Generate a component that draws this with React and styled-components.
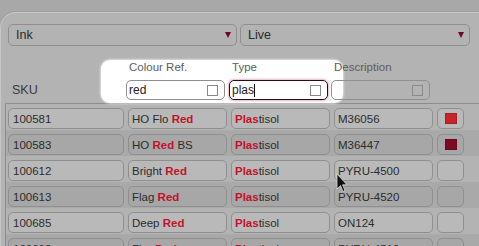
import React from 'react';
import { styled, createGlobalStyle } from 'styled-components';

const GlobalStyle = createGlobalStyle`
  html, body {
    margin: 0;
    background: #a8a8a8;
  }
  body {
    width: 479px;
    height: 246px;
    overflow: hidden;
    font-family: "Liberation Sans", Arial, sans-serif;
  }
`;

const Page = styled.div`
  position: relative;
  width: 479px;
  height: 246px;
  overflow: hidden;
`;

const Panel = styled.div`
  margin-top: 12px;
  height: 240px;
  background: #b3b3b3;
  border-top: 1px solid #cbcbcb;
  border-left: 1px solid #c6c6c6;
  border-top-left-radius: 16px;
  box-shadow: 0 -1px 0 #9d9d9d;
  padding-top: 11px;
  box-sizing: border-box;
`;

const SelectRow = styled.div`
  display: grid;
  grid-template-columns: 229px 230px;
  column-gap: 3px;
  padding-left: 7px;
`;

const Select = styled.div`
  height: 22px;
  box-sizing: border-box;
  border: 1px solid #8f8f8f;
  border-radius: 5px;
  display: flex;
  align-items: center;
  justify-content: space-between;
  padding: 0 5px 0 7px;
  font-size: 12.5px;
  color: #2a2a2a;
`;

const Arrow = styled.span`
  width: 0;
  height: 0;
  border-left: 3.5px solid transparent;
  border-right: 3.5px solid transparent;
  border-top: 6px solid #6e0a20;
`;

const Header = styled.div`
  position: relative;
  display: grid;
  grid-template-columns: 114px 99px 99px 98px;
  column-gap: 4px;
  margin-left: 7px;
  padding: 14px 0 3px;
`;

const Highlight = styled.div`
  position: absolute;
  left: 93px;
  top: 14px;
  bottom: 0;
  width: 242px;
  border-radius: 9px;
  background: #fff;
  box-shadow: 0 0 2px 1px rgba(255, 255, 255, 0.55);
`;

const FilterCol = styled.div`
  position: relative;
  z-index: 1;
  display: flex;
  flex-direction: column;
  justify-content: flex-end;
  gap: 6px;
  margin-left: ${(p) => (p.$shift ? '-1px' : '0')};
`;

const Label = styled.div`
  height: 14px;
  line-height: 14px;
  padding-left: 3px;
  font-size: 11.5px;
  color: #5c5c5c;
`;

const SkuLabel = styled.div`
  height: 20px;
  line-height: 20px;
  padding-left: 4px;
  font-size: 12.5px;
  color: #3a3a3a;
`;

const Input = styled.div`
  height: 20px;
  box-sizing: border-box;
  display: flex;
  align-items: center;
  padding: 0 6px 0 2px;
  border: ${(p) => (p.$focus ? '1.5px solid #2b0b1a' : '1px solid #8f8f8f')};
  border-radius: 5px;
  box-shadow: ${(p) => (p.$focus ? '0 0 2px 1px rgba(214, 120, 150, 0.55)' : 'none')};
  font-size: 12px;
  color: #222;
`;

const InputText = styled.span`
  flex: 1;
  display: flex;
  align-items: center;
`;

const Caret = styled.span`
  width: 1px;
  height: 13px;
  background: #111;
`;

const Check = styled.span`
  width: 11px;
  height: 11px;
  box-sizing: border-box;
  border: 1px solid #8a8a8a;
`;

const Table = styled.div`
  margin-left: 4px;
  border-top: 1px solid #8d8d8d;
  border-left: 1px solid #8d8d8d;
`;

const Row = styled.div`
  display: grid;
  grid-template-columns: 116px 99px 99px 99px 27px;
  column-gap: 4px;
  padding: 4px 0 1px 2px;
  background: ${(p) => (p.$alt ? '#a9a9a9' : 'transparent')};
`;

const Cell = styled.div`
  height: 21px;
  box-sizing: border-box;
  display: flex;
  align-items: center;
  justify-content: ${(p) => (p.$center ? 'center' : 'flex-start')};
  padding: 0 3px 0 ${(p) => (p.$wide ? '4px' : '3px')};
  border: 1px solid #8f8f8f;
  border-radius: 5px;
  background: ${(p) => (p.$alt ? '#a7a7a7' : '#b9b9b9')};
  font-size: 11.5px;
  color: #2c2c2c;
  white-space: pre;
  overflow: hidden;
`;

const Hit = styled.b`
  color: #c3112b;
`;

const Swatch = styled.span`
  width: 12px;
  height: 11px;
  background: ${(p) => p.$color};
  border: 1px solid rgba(0, 0, 0, 0.15);
  box-sizing: border-box;
`;

const Pointer = styled.svg`
  position: absolute;
  left: 336px;
  top: 173px;
`;

const rows = [
  { sku: '100581', pre: 'HO Flo ', post: '', desc: 'M36056', color: '#c8222a' },
  { sku: '100583', pre: 'HO ', post: ' BS', desc: 'M36447', color: '#7c0a22' },
  { sku: '100612', pre: 'Bright ', post: '', desc: 'PYRU-4500' },
  { sku: '100613', pre: 'Flag ', post: '', desc: 'PYRU-4520' },
  { sku: '100685', pre: 'Deep ', post: '', desc: 'ON124' },
  { sku: '100690', pre: 'Fire ', post: '', desc: 'PYRU-4510' },
];

export default function App() {
  return (
    <Page>
      <GlobalStyle />
      <Panel>
        <SelectRow>
          <Select>Ink<Arrow /></Select>
          <Select>Live<Arrow /></Select>
        </SelectRow>

        <Header>
          <Highlight />
          <FilterCol>
            <SkuLabel>SKU</SkuLabel>
          </FilterCol>
          <FilterCol>
            <Label>Colour Ref.</Label>
            <Input>
              <InputText>red</InputText>
              <Check />
            </Input>
          </FilterCol>
          <FilterCol>
            <Label>Type</Label>
            <Input $focus>
              <InputText>plas<Caret /></InputText>
              <Check />
            </Input>
          </FilterCol>
          <FilterCol $shift>
            <Label>Description</Label>
            <Input>
              <InputText />
              <Check />
            </Input>
          </FilterCol>
        </Header>

        <Table>
          {rows.map((r, i) => {
            const alt = i % 2 === 1;
            return (
              <Row key={r.sku} $alt={alt}>
                <Cell $alt={alt} $wide>{r.sku}</Cell>
                <Cell $alt={alt}>
                  <span>{r.pre}<Hit>Red</Hit>{r.post}</span>
                </Cell>
                <Cell $alt={alt}>
                  <span><Hit>Plas</Hit>tisol</span>
                </Cell>
                <Cell $alt={alt}>{r.desc}</Cell>
                <Cell $alt={alt} $center>
                  {r.color && <Swatch $color={r.color} />}
                </Cell>
              </Row>
            );
          })}
        </Table>
      </Panel>

      <Pointer width="12" height="20" viewBox="0 0 12 20">
        <path d="M1 1 L1 16 L4.5 12.5 L7 18.5 L9 17.6 L6.6 11.8 L11 11.8 Z" fill="#111" stroke="#d8d8d8" strokeWidth="0.8" />
      </Pointer>
    </Page>
  );
}
